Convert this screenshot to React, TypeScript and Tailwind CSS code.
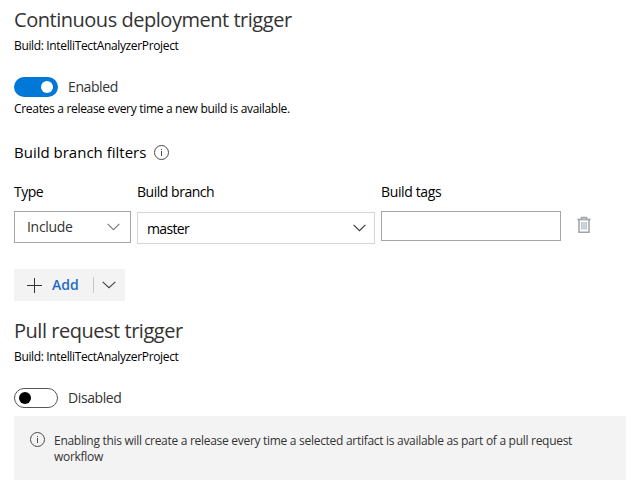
import React from "react";

function InfoIcon() {
  return (
    <svg width="15" height="15" viewBox="0 0 15 15" fill="none" stroke="#4a4a4a" className="block shrink-0">
      <circle cx="7.5" cy="7.5" r="7" strokeWidth="1" />
      <path d="M7.5 6V11" strokeWidth="1" />
      <path d="M7.5 4V5" strokeWidth="1" />
    </svg>
  );
}

function Chevron({ color, width = 13 }: { color: string; width?: number }) {
  return (
    <svg width={width} height="8" viewBox="0 0 13 8" preserveAspectRatio="none" fill="none" stroke={color} className="block shrink-0">
      <path d="M0.6 0.8L6.5 6.7L12.4 0.8" strokeWidth="1.05" />
    </svg>
  );
}

function TrashIcon() {
  return (
    <svg width="14" height="18" viewBox="0 0 14 18" fill="none" stroke="#a0a4a8" className="block shrink-0">
      <path d="M0.5 3.5H13.5" strokeWidth="1.8" />
      <path d="M4.5 3.5V1.5H9.5V3.5" strokeWidth="1.5" fill="#c9cccf" />
      <path d="M2 4V16.2H12V4" strokeWidth="1.5" />
      <path d="M4.9 6V13.5M7 6V13.5M9.1 6V13.5" stroke="#acb6be" strokeWidth="1.3" />
    </svg>
  );
}

function Heading({ children }: { children: string }) {
  return (
    <>
      <h2 className="h-7 text-[20px] leading-7 tracking-[-0.47px] text-[#333333]">{children}</h2>
      <p className="mt-1 h-4 text-[12px] leading-4 tracking-[-0.35px] text-black">Build: IntelliTectAnalyzerProject</p>
    </>
  );
}

function Toggle({ on }: { on: boolean }) {
  return (
    <div className="flex h-5 items-center">
      <span
        className={
          on
            ? "flex h-5 w-11 items-center justify-end rounded-full bg-[#0078d7] pr-[5px]"
            : "flex h-5 w-11 items-center rounded-full border border-[#555555] pl-1"
        }
      >
        <span className={on ? "size-3 rounded-full bg-white" : "size-3 rounded-full bg-black"} />
      </span>
      <span className="ml-[10px] text-[14px] leading-5 tracking-[-0.4px] text-[#333333]">{on ? "Enabled" : "Disabled"}</span>
    </div>
  );
}

export default function App() {
  return (
    <main className="h-[491px] w-[632px] overflow-hidden whitespace-nowrap bg-white pl-[14px] pt-[6px] font-['Open_Sans','Noto_Sans',sans-serif]">
      <section>
        <Heading>Continuous deployment trigger</Heading>
        <div className="mt-[23px]">
          <Toggle on />
        </div>
        <p className="mt-1 h-4 text-[12px] leading-4 tracking-[-0.31px] text-black">
          Creates a release every time a new build is available.
        </p>
        <div className="mt-[25px] flex h-[21px] items-start gap-[8px]">
          <h3 className="text-[15px] leading-5 text-black">Build branch filters</h3>
          <span className="pt-[3px]">
            <InfoIcon />
          </span>
        </div>
        <div className="mt-[19px] flex gap-[6px] text-[14px] leading-5 text-black">
          <div className="w-[117px]">
            <label className="block h-5 tracking-[-0.5px]">Type</label>
            <div className="mt-[9px] flex h-8 items-center justify-between border border-[#a6a6a6] pl-3 pr-[10px] text-[#333333]">
              <span className="tracking-[-0.3px]">Include</span>
              <Chevron color="#777777" />
            </div>
          </div>
          <div className="w-[238px]">
            <label className="block h-5 tracking-[-0.47px]">Build branch</label>
            <div className="mt-[10px] flex h-8 items-center justify-between border border-[#d6d6d6] pl-[9px] pr-2">
              <span className="pt-0.5 tracking-[-0.65px]">master</span>
              <Chevron color="#333333" />
            </div>
          </div>
          <div className="w-[180px]">
            <label className="block h-5 tracking-[-0.37px]">Build tags</label>
            <div className="mt-[9px] h-[30px] border border-[#a6a6a6]" />
          </div>
          <div className="ml-[10px] pt-[34px]">
            <TrashIcon />
          </div>
        </div>
        <div className="mt-[25px] flex h-8 w-[111px] items-center bg-[#f3f3f3]">
          <svg width="15" height="15" viewBox="0 0 15 15" stroke="#333333" className="ml-[13px] block shrink-0">
            <path d="M7.5 0V15M0 7.5H15" strokeWidth="1" />
          </svg>
          <span className="ml-[10px] w-[27px] text-[14px] font-semibold leading-5 text-[#1f6dbf]">Add</span>
          <span className="ml-[14px] h-4 w-px bg-[#c8c8c8]" />
          <span className="ml-2">
            <Chevron color="#444444" width={14} />
          </span>
        </div>
      </section>
      <section className="mt-4">
        <Heading>Pull request trigger</Heading>
        <div className="mt-[23px]">
          <Toggle on={false} />
        </div>
        <div className="mt-2 flex h-16 w-[612px] bg-[#f3f3f3] pl-4 pt-4">
          <InfoIcon />
          <p className="ml-[9px] pt-px text-[12px] leading-4 tracking-[-0.29px] text-[#333333]">
            Enabling this will create a release every time a selected artifact is available as part of a pull request
            <br />
            workflow
          </p>
        </div>
      </section>
    </main>
  );
}
